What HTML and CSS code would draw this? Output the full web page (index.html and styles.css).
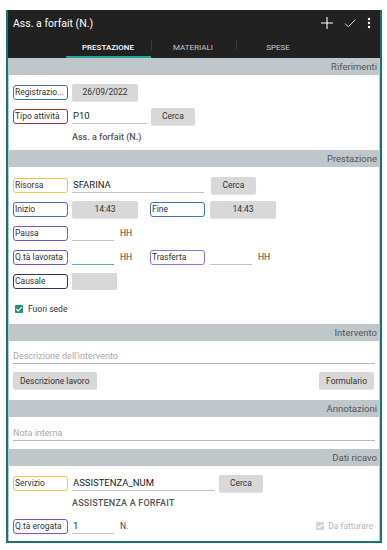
FILE: index.html
```html
<!DOCTYPE html>
<html lang="it">
<head>
  <meta charset="UTF-8">
  <title>Ass. a forfait (N.)</title>
  <link rel="stylesheet" href="styles.css">
</head>
<body>
  <div class="frame">
    <div class="appbar">
      <div class="toolbar">
        <span class="title">Ass. a forfait (N.)</span>
        <div class="actions">
          <svg width="14" height="14" viewBox="0 0 14 14"><path d="M7 1v12M1 7h12" stroke="#fff" stroke-width="1.1"/></svg>
          <svg width="14" height="14" viewBox="0 0 14 14"><path d="M2 7.5l3.3 3.3L12.5 3.5" stroke="#ddd" stroke-width="1" fill="none"/></svg>
          <svg width="6" height="14" viewBox="0 0 6 14"><circle cx="3" cy="3" r="1.2" fill="#fff"/><circle cx="3" cy="7" r="1.2" fill="#fff"/><circle cx="3" cy="11" r="1.2" fill="#fff"/></svg>
        </div>
      </div>
      <div class="tabs">
        <div class="tab active">PRESTAZIONE</div>
        <div class="tab">MATERIALI</div>
        <div class="tab">SPESE</div>
      </div>
    </div>

    <div class="band">Riferimenti</div>
    <div class="panel p-rif">
      <div class="row">
        <span class="lbl blue">Registrazio...</span>
        <span class="btn w66">26/09/2022</span>
      </div>
      <div class="row">
        <span class="lbl red">Tipo attività</span>
        <span class="field w75">P10</span>
        <span class="btn cerca">Cerca</span>
      </div>
      <div class="desc">Ass. a forfait (N.)</div>
    </div>

    <div class="band">Prestazione</div>
    <div class="panel p-prest">
      <div class="row">
        <span class="lbl yellow">Risorsa</span>
        <span class="field w132">SFARINA</span>
        <span class="btn cerca wide">Cerca</span>
      </div>
      <div class="row">
        <div class="half">
          <span class="lbl blue">Inizio</span>
          <span class="btn w66">14:43</span>
        </div>
        <span class="lbl blue">Fine</span>
        <span class="btn w66 ml1">14:43</span>
      </div>
      <div class="row">
        <span class="lbl purple">Pausa</span>
        <span class="field w42"></span>
        <span class="unit">HH</span>
      </div>
      <div class="row">
        <div class="half">
          <span class="lbl purple">Q.tà lavorata</span>
          <span class="field w42 focus"></span>
          <span class="unit">HH</span>
        </div>
        <span class="lbl lilac">Trasferta</span>
        <span class="field w42 ml1"></span>
        <span class="unit">HH</span>
      </div>
      <div class="row">
        <span class="lbl navy">Causale</span>
        <span class="greybox"></span>
      </div>
      <div class="check-row">
        <span class="check on"><svg width="8" height="8" viewBox="0 0 8 8"><path d="M1.3 4.2l1.8 1.8L6.8 2.2" stroke="#fff" stroke-width="1.2" fill="none"/></svg></span>
        Fuori sede
      </div>
    </div>

    <div class="band">Intervento</div>
    <div class="panel p-int">
      <div class="line-input">Descrizione dell'intervento</div>
      <div class="btn-row">
        <span class="btn big">Descrizione lavoro</span>
        <span class="btn big">Formulario</span>
      </div>
    </div>

    <div class="band">Annotazioni</div>
    <div class="panel p-note">
      <div class="line-input">Nota interna</div>
    </div>

    <div class="band">Dati ricavo</div>
    <div class="panel p-ricavo">
      <div class="row">
        <span class="lbl yellow">Servizio</span>
        <span class="field w143">ASSISTENZA_NUM</span>
        <span class="btn cerca ml3">Cerca</span>
      </div>
      <div class="desc">ASSISTENZA A FORFAIT</div>
      <div class="row last">
        <span class="lbl purple">Q.tà erogata</span>
        <span class="field w42">1</span>
        <span class="unit">N.</span>
        <span class="fatt">
          <span class="check off"><svg width="8" height="8" viewBox="0 0 8 8"><path d="M1.3 4.2l1.8 1.8L6.8 2.2" stroke="#fff" stroke-width="1.2" fill="none"/></svg></span>
          Da fatturare
        </span>
      </div>
    </div>
  </div>
</body>
</html>
```

FILE: styles.css
```css
body {
  margin: 0;
  background: #fff;
  font-family: Roboto, "Liberation Sans", sans-serif;
  color: #333;
}

.frame {
  margin: 10px 5px 0 6px;
  width: 372px;
  border: 2px solid #17756d;
  border-top: 0;
  background: #bfc7cb;
}

.appbar {
  background: #212121;
  color: #fff;
}

.toolbar {
  height: 26px;
  display: flex;
  align-items: center;
  padding: 0 8px 0 5px;
}

.title {
  font-size: 10.5px;
  flex: 1;
}

.actions {
  display: flex;
  align-items: center;
  gap: 9px;
}

.tabs {
  display: flex;
  justify-content: center;
  height: 22px;
  padding-right: 2px;
}

.tab {
  width: 85px;
  display: flex;
  align-items: center;
  justify-content: center;
  font-size: 8px;
  color: #c8c8c8;
  position: relative;
}

.tab + .tab::before {
  content: "";
  position: absolute;
  left: 0;
  top: 4px;
  height: 10px;
  border-left: 1px solid #3a3a3a;
}

.tab.active {
  color: #fff;
  font-weight: 500;
  border-bottom: 2px solid #26a69a;
  padding-top: 2px;
}

.band {
  height: 17px;
  line-height: 18px;
  text-align: right;
  font-size: 9.5px;
  color: #555;
  padding-right: 3px;
}

.panel {
  background: #fff;
  margin: 0 1px;
  padding: 0 4px;
}

.p-rif { padding-top: 8px; height: 67px; }
.p-prest { padding-top: 9px; height: 148px; }
.p-int { padding-top: 6px; height: 53px; }
.p-note { padding-top: 7px; height: 25px; }
.p-ricavo { padding-top: 8px; height: 67px; }

.row {
  display: flex;
  align-items: center;
  height: 18px;
  margin-bottom: 6px;
}

.row > *, .half > * {
  flex: none;
}

.half {
  width: 137px;
  display: flex;
  align-items: center;
  height: 18px;
}

.lbl {
  box-sizing: border-box;
  width: 55px;
  height: 15px;
  border: 1px solid;
  border-radius: 3px;
  font-size: 8.5px;
  line-height: 13px;
  padding-left: 1px;
  white-space: nowrap;
  overflow: hidden;
  margin-right: 4px;
  color: #333;
}

.blue { border-color: #4273c0; }
.red { border-color: #a8343a; }
.yellow { border-color: #f3c744; }
.purple { border-color: #7b4fd0; }
.navy { border-color: #2c3566; }
.lilac { border-color: #9a6fe0; }

.btn {
  box-sizing: border-box;
  height: 17px;
  background: #d8d8d8;
  border-radius: 2px;
  box-shadow: 0 1px 1px rgba(0, 0, 0, 0.12);
  font-size: 8.5px;
  display: inline-flex;
  align-items: center;
  justify-content: center;
  color: #333;
}

.w66 { width: 66px; }
.ml1 { margin-left: 1px; }
.ml3 { margin-left: 3px; }

.cerca {
  width: 44px;
  height: 17px;
  margin-left: 4px;
}

.cerca.wide { margin-left: 7px; width: 45px; }

.field {
  box-sizing: border-box;
  height: 15px;
  border-bottom: 1px solid #c4c4c4;
  font-size: 9.5px;
  line-height: 14px;
  padding-left: 1px;
  color: #222;
  align-self: flex-end;
  margin-bottom: 1px;
}

.field.focus { border-bottom: 1px solid #4db6ac; }

.w42 { width: 42px; }
.w75 { width: 75px; }
.w132 { width: 132px; }
.w143 { width: 143px; }

.unit {
  width: 30px;
  padding-left: 6px;
  box-sizing: border-box;
  font-size: 8.5px;
  color: #444;
}

.greybox {
  width: 45px;
  height: 17px;
  background: #d8d8d8;
}

.desc {
  font-size: 9px;
  font-weight: 500;
  color: #555;
  padding-left: 59px;
  height: 12px;
  line-height: 12px;
  margin-top: 1px;
}

.p-ricavo .desc { margin-top: -1px; margin-bottom: 8px; letter-spacing: 0.2px; }

.check-row {
  display: flex;
  align-items: center;
  gap: 5px;
  font-size: 8.5px;
  color: #333;
  padding-left: 2px;
  margin-top: 14px;
}

.check {
  width: 8px;
  height: 8px;
  border-radius: 1px;
  display: inline-flex;
}

.check.on { background: #1f8f82; }
.check.off { background: #d4d4d4; }

.line-input {
  height: 16px;
  border-bottom: 1px solid #b8b8b8;
  font-size: 9px;
  line-height: 18px;
  color: #a8a8a8;
}

.btn-row {
  display: flex;
  justify-content: space-between;
  margin-top: 8px;
  padding-right: 1px;
}

.btn.big {
  padding: 0 7px;
  font-size: 8.5px;
}

.row.last { margin-bottom: 0; }

.fatt {
  margin-left: auto;
  display: flex;
  align-items: center;
  gap: 4px;
  font-size: 8.5px;
  color: #b8b8b8;
  padding-right: 2px;
}
```
